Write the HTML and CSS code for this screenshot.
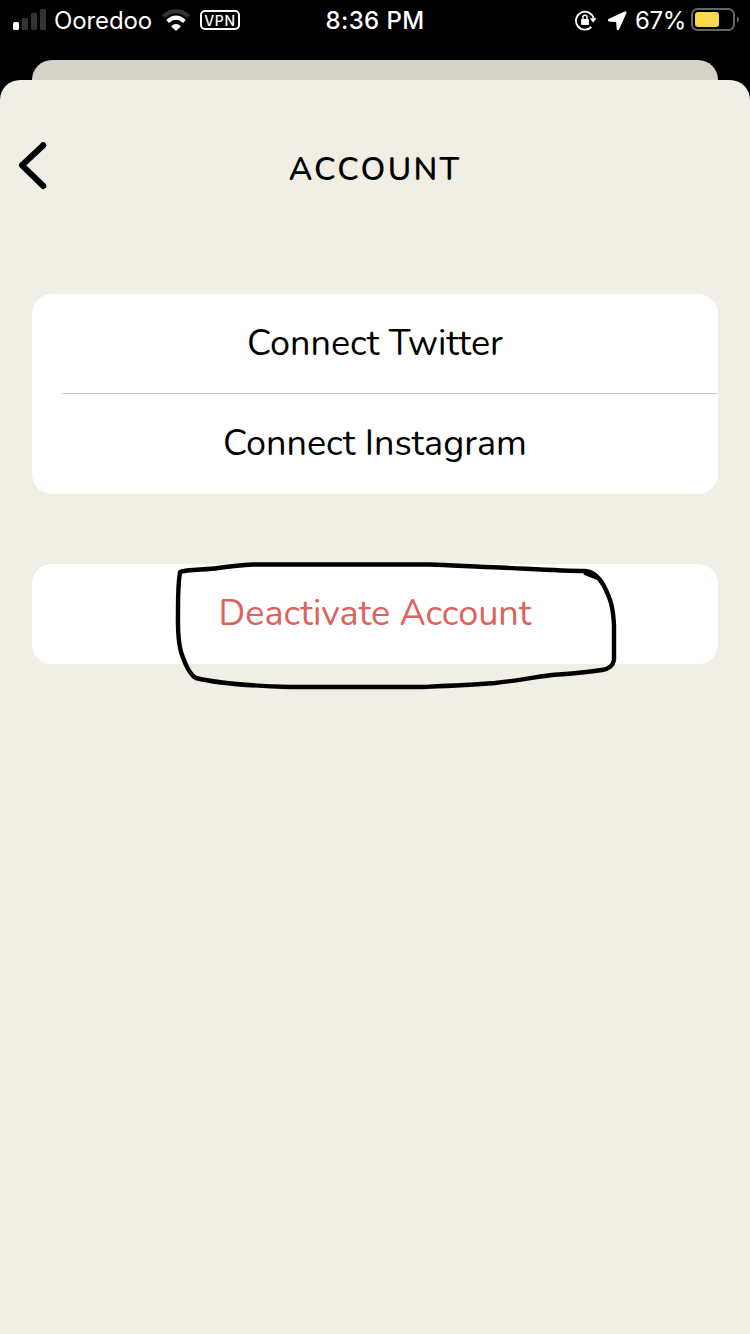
FILE: index.html
```html
<!DOCTYPE html>
<html lang="en">
<head>
<meta charset="utf-8">
<title>Account</title>
<link rel="stylesheet" href="styles.css">
</head>
<body>
<div class="screen">
  <header class="status">
    <div class="status-left">
      <svg class="signal" width="34" height="22" viewBox="0 0 34 22">
        <rect x="0" y="13" width="6" height="8" rx="1.5" fill="#fff"/>
        <g fill="#333"><rect x="9" y="9" width="6" height="12" rx="1.5"/><rect x="18" y="4" width="6" height="17" rx="1.5"/><rect x="27" y="0" width="6" height="21" rx="1.5"/></g>
      </svg>
      <span class="carrier">Ooredoo</span>
      <svg class="wifi" width="30" height="22" viewBox="0 0 30 22">
        <path d="M1.3 7.2Q14 -2.8 26.7 7.2" fill="none" stroke="#363636" stroke-width="4"/>
        <path d="M5.6 12.4Q14 5 22.4 12.4" fill="none" stroke="#fff" stroke-width="4"/>
        <path d="M9 17.2Q14 13 19 17.2L14 22Z" fill="#fff"/>
      </svg>
      <span class="vpn">VPN</span>
    </div>
    <span class="time">8:36 PM</span>
    <div class="status-right">
      <svg class="lock" width="22" height="22" viewBox="0 0 22 22">
        <path d="M16.4 17A9 9 0 1 1 18.7 8.5" fill="none" stroke="#fff" stroke-width="1.8"/>
        <path d="M14.8 8.2H21.4L18.1 12.8Z" fill="#fff"/>
        <rect x="6.1" y="9" width="7.8" height="6" rx=".8" fill="#fff"/>
        <path d="M7.9 9.5V7.4a2.1 2.1 0 0 1 4.2 0V9.5" fill="none" stroke="#fff" stroke-width="1.4"/>
      </svg>
      <svg class="arrow" width="20" height="20" viewBox="0 0 20 20"><path d="M17.8 1 1.8 8.5Q1.2 9.6 2 9.9L9 10.4Q9.7 10.5 9.8 11.2L10.3 18Q10.7 19 11.6 18L18.8 2Q19.1.6 17.8 1Z" fill="#fff" stroke="#fff" stroke-width="1.2" stroke-linejoin="round"/></svg>
      <span class="percent">67%</span>
      <svg class="battery" width="48" height="24" viewBox="0 0 48 24">
        <rect x="1" y="1" width="42" height="21" rx="5.5" fill="none" stroke="#666" stroke-width="2"/>
        <rect x="4" y="4" width="24" height="15" rx="3" fill="#f9d84a"/>
        <path d="M46 8Q50 11.5 46 15Z" fill="#666"/>
      </svg>
    </div>
  </header>
  <div class="sheet-behind"></div>
  <main class="sheet">
    <nav class="nav">
      <svg class="back" width="30" height="50" viewBox="0 0 30 50"><path d="M25.3 5.3 4 25.3 25.3 46" fill="none" stroke="#000" stroke-width="6" stroke-linecap="round" stroke-linejoin="round"/></svg>
      <h1 class="title">ACCOUNT</h1>
    </nav>
    <section class="card">
      <div class="row"><span class="label">Connect Twitter</span></div>
      <div class="divider"></div>
      <div class="row"><span class="label">Connect Instagram</span></div>
    </section>
    <section class="card">
      <div class="row"><span class="label deactivate">Deactivate Account</span></div>
      <svg class="scribble" width="450" height="140" viewBox="170 555 450 140">
        <path d="M180 572C187 569 206 570 218 568C232 566 241 565 253 564.5H430C451 565 478 567 500 567.5C532 569 562 571 584 571C593 571 599 577 604 586C611 600 613 607 614 625V660C613 666 609 669 602 670C584 673 567 674 552 675C529 678 514 681 495 683C468 685 445 686 423 687H290C258 686 219 684 196 678C190 675 184 661 181 652C177 637 178 625 178 610C178 597 178 584 180 572Z" fill="none" stroke="#000" stroke-width="4.4" stroke-linejoin="round"/>
        <path d="M586 573 596 577" fill="none" stroke="#000" stroke-width="5" stroke-linecap="round"/>
      </svg>
    </section>
  </main>
</div>
</body>
</html>
```
FILE: styles.css
```css
body { margin: 0; background: #000; }
.screen { width: 750px; height: 1334px; display: flex; flex-direction: column; background: #000; overflow: hidden; }
svg { display: block; flex: none; }
.status { height: 60px; flex: none; display: grid; grid-template-columns: 1fr auto 1fr; color: #fff; font: 24px/42px Inter, "Liberation Sans", sans-serif; white-space: nowrap; }
.status-left { display: flex; padding-left: 13px; }
.status-right { display: flex; justify-content: flex-end; padding-right: 11px; }
.signal { margin-top: 9px; }
.carrier { width: 98px; margin-left: 7px; letter-spacing: -.1px; }
.wifi { margin: 9px 0 0 10px; }
.vpn { box-sizing: border-box; width: 40px; height: 20px; margin: 10px 0 0 8px; border: 2px solid #fff; border-radius: 5px; font-size: 14px; font-weight: 500; line-height: 17px; text-align: center; letter-spacing: .6px; }
.time { font-weight: 550; letter-spacing: .4px; }
.lock { margin-top: 10px; }
.arrow { margin: 11px 0 0 10px; }
.percent { margin-left: 8px; width: 49px; letter-spacing: -.3px; }
.battery { margin: 8px 0 0 7px; }
.sheet-behind { height: 20px; flex: none; margin: 0 32px; background: #d5d2ca; border-radius: 20px 20px 0 0; }
.sheet { flex: 1; background: #f0eee5; border-radius: 20px 20px 0 0; font-family: Nunito, Lato, sans-serif; }
.nav { height: 214px; display: grid; grid-template-columns: 100px 1fr 100px; align-items: start; }
.back { margin: 60px 0 0 18px; }
.title { margin: 70px 0 0; font-size: 32px; line-height: 40px; font-weight: 600; text-align: center; letter-spacing: 2.3px; }
.card { position: relative; margin: 0 32px 70px; background: #fff; border-radius: 20px; }
.row { height: 100px; display: flex; align-items: center; justify-content: center; }
.divider { height: 1px; margin: -1px 0 0 30px; background: #c7c7c7; }
.label { font-size: 36px; line-height: 44px; white-space: nowrap; color: #000; }
.deactivate { color: #dd625d; }
.scribble { position: absolute; left: 138px; top: -9px; }
```
